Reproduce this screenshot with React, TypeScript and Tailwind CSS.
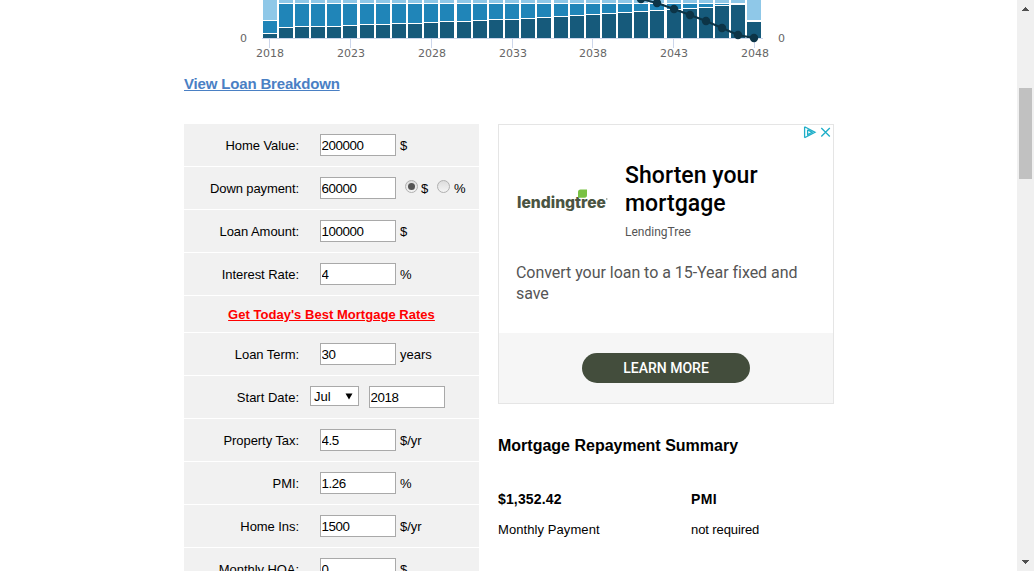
import React from "react";

const BAR_X = [
  263, 279, 295, 311, 327, 343, 360, 376, 392, 408, 424, 440, 457, 473, 489, 505,
  521, 537, 554, 570, 586, 602, 618, 634, 650, 667, 683, 699, 715, 731, 747,
];
const SPLIT_Y = [
  33, 27, 26, 26, 26, 25, 24, 24, 23, 23, 22, 21, 21, 20, 19, 19,
  18, 17, 16, 15, 14, 13, 12, 11, 10, 9, 8, 7, 5, 4, 21,
];
const BALANCE = [
  [625, -5], [641, -1], [657, 3], [674, 9], [690, 15], [706, 21], [722, 28], [738, 35], [754, 38],
];
const YEARS: [number, string][] = [
  [269, "2018"], [350, "2023"], [431, "2028"], [512, "2033"],
  [592, "2038"], [673, "2043"], [754, "2048"],
];

function Chart() {
  return (
    <svg width="1017" height="64" viewBox="0 0 1017 64" className="block shrink-0">
      <g shapeRendering="crispEdges">
        {BAR_X.map((x, i) => {
          const edge = i === 0 || i === 30;
          const lightEnd = edge ? 20 : 3;
          const split = SPLIT_Y[i];
          return (
            <g key={x}>
              <rect x={x} y={0} width={14} height={lightEnd} fill="#8fc8e8" />
              {i !== 30 && split > lightEnd + 1 && (
                <rect x={x} y={lightEnd + 1} width={14} height={split - lightEnd - 1} fill="#2085b8" />
              )}
              <rect x={x} y={split + 1} width={14} height={37 - split} fill="#165a7b" />
            </g>
          );
        })}
        <rect x="262" y="38" width="501" height="1" fill="#ccd6eb" />
        {YEARS.map(([x]) => (
          <rect key={x} x={x} y={39} width={1} height={9} fill="#ccd6eb" />
        ))}
      </g>
      <polyline points={BALANCE.map((p) => p.join(",")).join(" ")} fill="none" stroke="#0c3447" strokeWidth="2" />
      {BALANCE.map(([x, y]) => (
        <circle key={x} cx={x} cy={y} r="4.2" fill="#0c3447" />
      ))}
      <g fontFamily="DejaVu Sans" fontSize="11" fill="#666666">
        {YEARS.map(([x, label]) => (
          <text key={label} x={x + 1} y={57} textAnchor="middle">{label}</text>
        ))}
        <text x="240" y="42">0</text>
        <text x="778" y="42">0</text>
      </g>
    </svg>
  );
}

function Field({ value }: { value: string }) {
  return (
    <input
      readOnly
      value={value}
      className="block h-[22px] w-[76px] rounded-none border border-[#a9a9a9] bg-white p-0 pt-px pl-[0.5px] text-[13.33px] leading-4 tracking-[-0.4px] text-black outline-none"
    />
  );
}

function Row({ label, value, unit }: { label: string; value: string; unit: string }) {
  return (
    <div className="flex h-[42px] shrink-0 items-center bg-[#f1f1f1]">
      <div className="w-[115px] pt-0.5 text-right tracking-[-0.06px]">{label}</div>
      <div className="ml-[21px]"><Field value={value} /></div>
      <div className="ml-1 pt-0.5">{unit}</div>
    </div>
  );
}

function Radio({ on }: { on?: boolean }) {
  return (
    <span className="mb-1 flex size-[13px] items-center justify-center rounded-full border border-[#b0b0b0] bg-linear-to-b from-[#dddddd] to-[#f4f4f4]">
      {on && <span className="size-[7px] rounded-full bg-[#555555]" />}
    </span>
  );
}

function LoanForm() {
  return (
    <form className="flex h-[447px] w-[295px] flex-col gap-px overflow-hidden text-[13px] leading-4 text-black">
      <Row label="Home Value:" value="200000" unit="$" />
      <div className="flex h-[42px] shrink-0 items-center bg-[#f1f1f1]">
        <div className="w-[115px] pt-0.5 text-right tracking-[-0.1px]">Down payment:</div>
        <div className="ml-[21px]"><Field value="60000" /></div>
        <div className="ml-[9px] flex items-center">
          <Radio on />
          <span className="ml-[3px] w-4 pt-0.5">$</span>
          <Radio />
          <span className="ml-1 pt-0.5">%</span>
        </div>
      </div>
      <Row label="Loan Amount:" value="100000" unit="$" />
      <Row label="Interest Rate:" value="4" unit="%" />
      <div className="flex h-9 shrink-0 items-center justify-center bg-[#f1f1f1] pt-0.5">
        <a className="font-bold tracking-[0.03px] text-[#ff0000] underline">Get Today's Best Mortgage Rates</a>
      </div>
      <Row label="Loan Term:" value="30" unit="years" />
      <div className="flex h-[42px] shrink-0 items-center bg-[#f1f1f1]">
        <div className="w-[115px] pt-0.5 text-right">Start Date:</div>
        <div className="mb-0.5 ml-[11px] flex h-5 w-[49px] items-center justify-between border border-[#a9a9a9] bg-white pr-[5px] pl-[3px]">
          <span className="pt-px">Jul</span>
          <svg width="8" height="7" viewBox="0 0 8 7"><path d="M0.5 0.5h7L4 6.5z" fill="#000" /></svg>
        </div>
        <div className="ml-2.5"><Field value="2018" /></div>
      </div>
      <Row label="Property Tax:" value="4.5" unit="$/yr" />
      <Row label="PMI:" value="1.26" unit="%" />
      <Row label="Home Ins:" value="1500" unit="$/yr" />
      <Row label="Monthly HOA:" value="0" unit="$" />
    </form>
  );
}

function Logo() {
  return (
    <svg width="92" height="26" viewBox="0 0 92 26" className="block overflow-visible">
      <text x="1" y="19.500" fontFamily="Inter" fontWeight="800" fontSize="15.500" fill="#4a5442" textLength="89" lengthAdjust="spacingAndGlyphs">lendingtree</text>
      <path d="M62 9.800V4q0-2.500 2.500-2.500h6.500V7q0 2.800-2.500 2.800z" fill="#79c143" />
      <circle cx="90.800" cy="11" r="0.700" fill="#6a7363" />
    </svg>
  );
}

function Ad() {
  return (
    <div className="relative flex h-[280px] w-[336px] flex-col border border-[#e5e5e5] bg-white font-[Roboto]">
      <svg width="30" height="14" viewBox="0 0 30 14" className="absolute top-0 right-0" fill="none" stroke="#1eaec8" strokeWidth="1.300">
        <path d="M1.600 1.700v11M1.600 1.700L12 7.200L1.600 12.700M4.600 4.700v5L9 7.200L4.600 4.900" />
        <path d="M18.300 3l8.500 8.500M26.800 3l-8.500 8.500" />
      </svg>
      <div className="flex h-[126px] pt-[36px] pl-[17px]">
        <div className="w-[109px] pt-[27px]"><Logo /></div>
        <div className="pt-px">
          <div className="text-[23px] leading-7 font-medium tracking-[0.05px] text-black">Shorten your<br />mortgage</div>
          <div className="mt-1.5 text-[12px] leading-4 text-[#555555]">LendingTree</div>
        </div>
      </div>
      <div className="h-[82px] pt-[11px] pl-[17px] text-[16px] leading-[21px] tracking-[-0.04px] text-[#555555]">
        Convert your loan to a 15-Year fixed and<br />save
      </div>
      <div className="flex h-[70px] items-center justify-center bg-[#f6f6f6]">
        <button className="h-[30px] w-[168px] rounded-full bg-[#434d3c] text-[14px] font-medium text-white">LEARN MORE</button>
      </div>
    </div>
  );
}

function Scrollbar() {
  return (
    <div className="flex w-[17px] flex-col items-center bg-[#f0f0f0]">
      <svg width="17" height="88" viewBox="0 0 17 88" className="shrink-0" shapeRendering="crispEdges"><path d="M8 7h1v1h1v1h1v1h1v1H5v-1h1V9h1V8h1z" fill="#505050" /></svg>
      <div className="h-[91px] w-[13px] shrink-0 bg-[#c1c1c1]" />
      <div className="grow" />
      <svg width="17" height="17" viewBox="0 0 17 17" className="shrink-0" shapeRendering="crispEdges"><path d="M5 6h7v1h-1v1h-1v1H9v1H8V9H7V8H6V7H5z" fill="#505050" /></svg>
    </div>
  );
}

export default function App() {
  return (
    <div className="flex h-[571px] w-[1034px] overflow-hidden bg-white font-['Liberation_Sans',Arial,sans-serif]">
      <main className="flex w-[1017px] flex-col">
        <Chart />
        <div className="h-[60px] pt-2 pl-[184px]">
          <a className="text-[15px] leading-[18px] font-bold tracking-[-0.17px] text-[#4a80c4] underline">View Loan Breakdown</a>
        </div>
        <div className="flex gap-[19px] pl-[184px]">
          <LoanForm />
          <section className="w-[336px] text-black">
            <Ad />
            <h2 className="mt-8 text-[16px] leading-5 font-bold">Mortgage Repayment Summary</h2>
            <div className="mt-[33px] flex text-[13px] leading-4">
              <div className="w-[193px]">
                <div className="text-[14px] leading-5 font-bold tracking-[0.15px]">$1,352.42</div>
                <div className="mt-[13px] tracking-[0.08px]">Monthly Payment</div>
              </div>
              <div>
                <div className="text-[14px] leading-5 font-bold tracking-[0.4px]">PMI</div>
                <div className="mt-[13px] tracking-[-0.1px]">not required</div>
              </div>
            </div>
          </section>
        </div>
      </main>
      <Scrollbar />
    </div>
  );
}
